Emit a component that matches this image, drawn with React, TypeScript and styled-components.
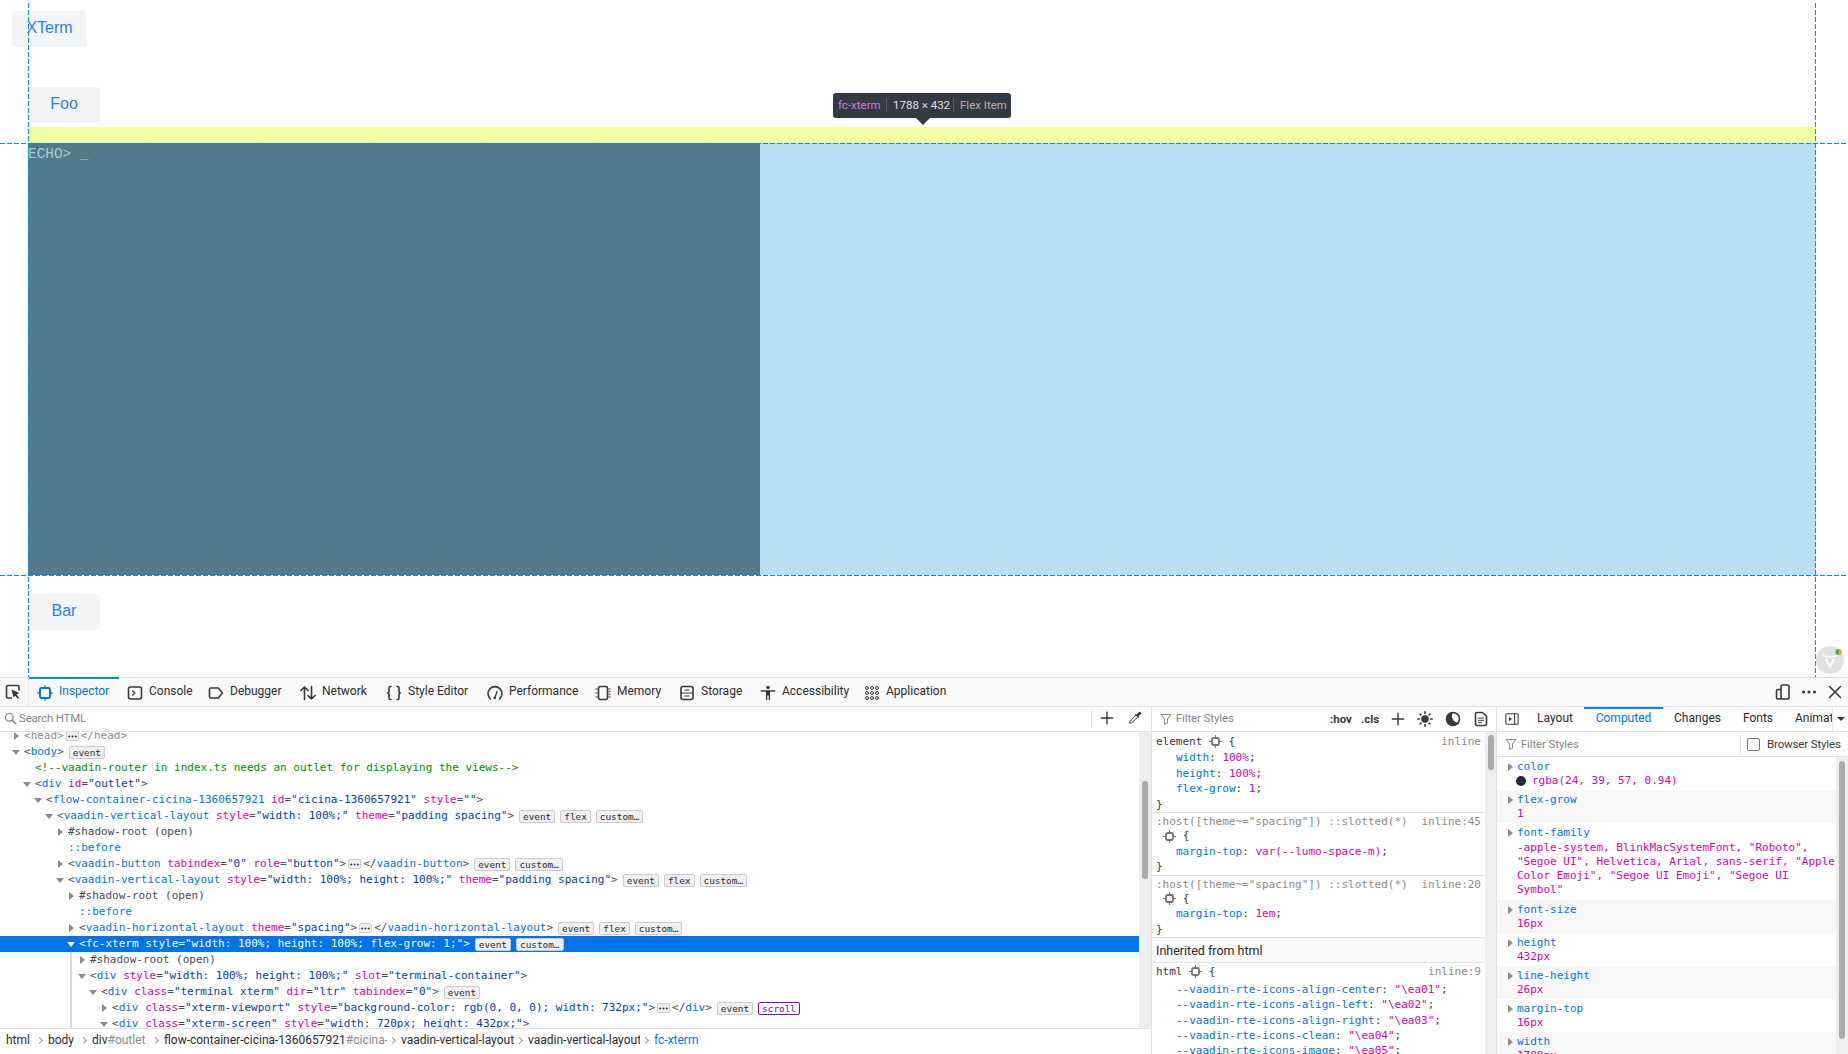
import React from "react";
import styled, { createGlobalStyle } from "styled-components";

const Global = createGlobalStyle`
  html, body { margin: 0; padding: 0; background: #fff; }
  * { box-sizing: border-box; }
`;

const UI = `"Roboto", "Noto Sans", sans-serif`;
const MONO = `"DejaVu Sans Mono", monospace`;

const Page = styled.div`
  width: 1848px; height: 1054px; overflow: hidden; display: flex; flex-direction: column;
  font-family: ${UI}; font-size: 12px; color: #2a2a2e;
`;
const Viewport = styled.div`
  position: relative; height: 677px; flex: none; padding: 11px 12px 0; background: #fff;
  font-family: "Liberation Sans", Arial, sans-serif;
`;
const Btn = styled.div`
  width: ${(p: { $w: number }) => p.$w}px; height: 36px; border-radius: 4px; background: #f3f4f6;
  color: #2a7ff0; font-size: 16px; display: flex; align-items: center; justify-content: center; padding-bottom: 2px;
`;
const Layout = styled.div`
  padding: 40px 0 0 16px; width: 1804px;
`;
const MarginBand = styled.div`
  height: 16px; margin-top: 4px; background: #f4ffa0; width: 1788px;
`;
const Terminal = styled.div`
  height: 432px; width: 1788px; display: flex; background: #b7e1f3; margin-bottom: 19px;
`;
const Screen = styled.div`
  width: 732px; background: #527a8c; color: #a3cbdc; padding: 3px 0 0 0;
  font: 14.4px/17px "Liberation Mono", "Courier New", monospace;
  white-space: pre;
`;
const GuideV = styled.div`
  position: absolute; top: 3px; bottom: 0; left: ${(p: { $x: number }) => p.$x}px; width: 1px;
  background: repeating-linear-gradient(to bottom, #0095dd 0 5px, transparent 5px 7px);
`;
const GuideH = styled.div`
  position: absolute; left: 0; right: 0; top: ${(p: { $y: number }) => p.$y}px; height: 1px;
  background: repeating-linear-gradient(to right, #0090d4 0 5px, transparent 5px 7px);
`;
const Tip = styled.div`
  position: absolute; left: 833px; top: 93px; width: 178px; height: 25px; background: #343a43;
  border-radius: 3px; display: flex; align-items: center; padding: 0 5px 2px; font: 11.5px ${UI}; color: #dfe1e5;
  &::after {
    content: ""; position: absolute; left: 83px; bottom: -7px; border: 7px solid transparent;
    border-bottom: 0; border-top-color: #343a43;
  }
`;
const TipPart = styled.span<{ $tone: string; $w: number }>`
  color: ${(p) => p.$tone}; width: ${(p) => p.$w}px; flex: none; white-space: nowrap;
`;
const TipSep = styled.span`
  width: 1px; height: 14px; background: #5b616b; margin: 0 6px; flex: none;
`;
const Badge = styled.div`
  position: absolute; left: 1816px; top: 646px; width: 28px; height: 28px;
`;

/* devtools */
const Dev = styled.div`
  flex: 1; min-height: 0; display: flex; flex-direction: column; background: #fff;
`;
const TopBar = styled.div`
  height: 30px; flex: none; background: #f9f9fa; border-top: 1px solid #e0e0e2; border-bottom: 1px solid #e0e0e2;
  display: flex; align-items: center; position: relative;
`;
const PickerCell = styled.div`
  width: 29px; height: 100%; border-right: 1px solid #e8e8ea; display: flex; align-items: center; justify-content: center; flex: none; padding-right: 3px;
`;
const Tab = styled.div<{ $active?: boolean }>`
  height: 30px; margin-top: -1px; padding: 0 8px; display: flex; align-items: center; gap: 6px; flex: none;
  color: ${(p) => (p.$active ? "#0074e8" : "#2a2a2e")};
  border-top: 2px solid ${(p) => (p.$active ? "#0a84ff" : "transparent")};
`;
const TabLabel = styled.span<{ $w: number }>`
  width: ${(p) => p.$w}px; white-space: nowrap; font-size: 12px; margin-top: -4px;
`;
const TopRight = styled.div`
  margin-left: auto; display: flex; align-items: center; gap: 10px; padding-right: 5px;
`;
const Split = styled.div`
  flex: 1; min-height: 0; display: flex;
`;
const MarkupPane = styled.div`
  width: 1152px; flex: none; display: flex; flex-direction: column; border-right: 1px solid #e0e0e2;
`;
const SearchBar = styled.div`
  height: 25px; flex: none; border-bottom: 1px solid #e0e0e2; display: flex; align-items: center; padding: 0 0 2px 4px; color: #86868a; position: relative;
`;
const SearchText = styled.span`
  margin-left: 2px; flex: 1; font-size: 11.5px; letter-spacing: -0.2px;
`;
const SearchTools = styled.div`
  width: 60px; display: flex; align-items: center; gap: 14px; padding-left: 8px;
  border-left: 1px solid #e8e8ea; height: 19px; flex: none;
`;
const MarkupBody = styled.div`
  flex: 1; min-height: 0; display: flex; overflow: hidden;
`;
const Tree = styled.div`
  flex: 1; min-width: 0; margin-top: -4px; font: 11px/16px ${MONO};
`;
const Row = styled.div<{ $level: number; $selected?: boolean; $dim?: boolean; $guide?: boolean }>`
  height: 16px; white-space: nowrap; display: flex; align-items: center;
  padding-left: ${(p) => 24 + p.$level * 11}px;
  --name: ${(p) => (p.$selected ? "#fff" : p.$dim ? "#8a8a90" : "#0074e8")};
  --attr: ${(p) => (p.$selected ? "#fff" : "#dd00a9")};
  --val: ${(p) => (p.$selected ? "#fff" : "#003eaa")};
  --pun: ${(p) => (p.$selected ? "#fff" : p.$dim ? "#8a8a90" : "#4a4a4f")};
  color: var(--pun);
  background: ${(p) => (p.$selected ? "#0074e8" : "transparent")};
  ${(p) => (p.$guide ? "background: linear-gradient(#dcdcdf,#dcdcdf) no-repeat 70px 0 / 2px 100%;" : "")}
`;
const Twisty = styled.span<{ $open?: boolean; $light?: boolean }>`
  width: 0; height: 0; flex: none; margin-left: ${(p) => (p.$open ? -12 : -10)}px;
  margin-right: ${(p) => (p.$open ? 4 : 5)}px;
  border-style: solid; border-color: transparent;
  ${(p) => {
    const c = p.$light ? "#fff" : "#8a8a8f";
    return p.$open
      ? `border-width: 5px 4px 0 4px; border-top-color: ${c};`
      : `border-width: 4px 0 4px 5px; border-left-color: ${c};`;
  }}
`;
const N = styled.span`color: var(--name); white-space: pre;`;
const A = styled.span`color: var(--attr); white-space: pre;`;
const V = styled.span`color: var(--val); white-space: pre;`;
const P = styled.span`white-space: pre;`;
const Comment = styled.span`color: #058b00; white-space: pre;`;
const Pill = styled.span<{ $purple?: boolean }>`
  margin-left: 5px; height: 13px; padding: 0 3px; border-radius: 2px; flex: none;
  font: 9.4px/11px ${MONO};
  border: 1px solid ${(p) => (p.$purple ? "#8000d7" : "#cacad1")};
  background: ${(p) => (p.$purple ? "#fff" : "#f0f0f2")};
  color: ${(p) => (p.$purple ? "#8000d7" : "#2a2a2e")};
`;
const DotsBox = styled.span`
  height: 10px; width: 13px; margin: 0 2px; border: 1px solid #cacad1; border-radius: 2px; background: #f0f0f2; flex: none;
  display: flex; align-items: center; justify-content: center;
`;
const Track = styled.div`
  width: ${(p: { $w: number }) => p.$w}px; background: #eeeef0; position: relative; flex: none;
`;
const Thumb = styled.div<{ $top: number; $h: number; $x: number }>`
  position: absolute; left: ${(p) => p.$x}px; top: ${(p) => p.$top}px; width: 6px; height: ${(p) => p.$h}px;
  border-radius: 3px; background: #ababae;
`;
const Crumbs = styled.div`
  height: 26px; flex: none; border-top: 1px solid #e0e0e2; display: flex; align-items: center; padding: 0 0 3px 6px; background: #fff; color: #2a2a2e;
`;
const Crumb = styled.span<{ $w: number; $on?: boolean }>`
  width: ${(p) => p.$w}px; flex: none; white-space: nowrap; overflow: hidden; color: ${(p) => (p.$on ? "#0074e8" : "#2a2a2e")};
`;
const CrumbId = styled.span`color: #8a8a90;`;
const Chev = styled.span`
  width: 5px; height: 5px; flex: none; border-top: 1px solid #9a9a9f; border-right: 1px solid #9a9a9f; transform: rotate(45deg); margin: 0 6px 0 3px;
`;

const RulesPane = styled.div`
  width: 345px; flex: none; display: flex; flex-direction: column; border-right: 1px solid #e0e0e2;
`;
const RulesBar = styled.div`
  height: 25px; flex: none; border-bottom: 1px solid #e0e0e2; display: flex; align-items: center; padding: 0 0 1px 8px; color: #86868a;
`;
const FilterText = styled.span`
  margin-left: 1px; flex: 1; font-size: 11.5px; letter-spacing: -0.1px; padding-bottom: 1px;
`;
const BoldBtn = styled.span`
  font-weight: 700; font-size: 11.5px; color: #38383d; width: ${(p: { $w: number }) => p.$w}px;
`;
const RulesTools = styled.div`
  display: flex; align-items: center; gap: 12px; padding-right: 7px; margin-left: 11px;
`;
const RulesBody = styled.div`
  flex: 1; min-height: 0; display: flex; overflow: hidden;
`;
const RulesList = styled.div`
  flex: 1; min-width: 0; font: 11px/15.4px ${MONO}; color: #38383d; padding-top: 2px;
`;
const Rule = styled.div`
  border-bottom: 1px solid #e0e0e2; padding: 1px 4px 0 4px;
  &:first-child { padding-top: 0; }
  &:last-child { border-bottom: 0; }
`;
const RuleHead = styled.div<{ $gap?: number }>`
  display: flex; align-items: center; white-space: pre; margin-bottom: ${(p) => p.$gap ?? 0}px;
`;
const Sel = styled.span<{ $grey?: boolean }>`
  color: ${(p) => (p.$grey ? "#8a8a90" : "#38383d")};
`;
const Src = styled.span`
  margin-left: auto; color: #8a8a90;
`;
const Decl = styled.div`
  padding-left: 20px; white-space: pre;
`;
const Prop = styled.span`color: #0074e8;`;
const Val2 = styled.span`color: #dd00a9;`;
const GearRow = styled.div`
  display: flex; align-items: center; padding-left: 7px; white-space: pre; margin-top: -1px;
`;
const Inherited = styled.div`
  height: 25px; display: flex; align-items: center; background: #f9f9fa; border-bottom: 1px solid #e0e0e2; padding-left: 4px;
  font: 12.5px ${UI}; color: #2a2a2e;
`;

const SidePane = styled.div`
  flex: 1; min-width: 0; display: flex; flex-direction: column;
`;
const SideTabs = styled.div`
  height: 25px; flex: none; border-bottom: 1px solid #e0e0e2; display: flex; align-items: center; position: relative;
`;
const SideToggle = styled.div`
  width: 29px; flex: none; display: flex; justify-content: center;
`;
const SideTab = styled.div<{ $active?: boolean; $w: number; $clipped?: boolean }>`
  width: ${(p) => p.$w}px; height: 25px; flex: none; font-size: 12px; white-space: nowrap; overflow: hidden;
  text-align: ${(p) => (p.$clipped ? "left" : "center")};
  padding-left: ${(p) => (p.$clipped ? 11 : 0)}px;
  color: ${(p) => (p.$active ? "#0074e8" : "#2a2a2e")};
  border-top: 2px solid ${(p) => (p.$active ? "#0a84ff" : "transparent")};
  line-height: 19px;
`;
const SideMore = styled.div`
  flex: 1; height: 100%; border-left: 1px solid #e8e8ea; display: flex; align-items: center; justify-content: center;
  &::after { content: ""; border: 4px solid transparent; border-bottom: 0; border-top-color: #38383d; }
`;
const SideFilter = styled.div`
  height: 25px; flex: none; border-bottom: 1px solid #e0e0e2; display: flex; align-items: center; padding-left: 8px; color: #86868a;
`;
const FilterGrow = styled.span`
  flex: 1; margin-left: 1px; font-size: 11.5px; letter-spacing: -0.1px;
`;
const BrowserStyles = styled.div`
  width: 108px; height: 19px; border-left: 1px solid #e8e8ea; display: flex; align-items: center; padding-left: 6px; gap: 7px; color: #38383d; flex: none; white-space: nowrap;
  font-size: 11.5px; letter-spacing: -0.15px;
`;
const Check = styled.span`
  width: 13px; height: 13px; border: 1px solid #737373; border-radius: 2px; flex: none;
`;
const SideBody = styled.div`
  flex: 1; min-height: 0; display: flex; overflow: hidden;
`;
const CompList = styled.div`
  flex: 1; min-width: 0; font: 11px/14px ${MONO};
`;
const CompRow = styled.div`
  padding: 3px 0 2.2px 20px; position: relative;
  &:nth-child(even) { background: #f7f7f8; }
`;
const CompTwisty = styled.span`
  position: absolute; left: 11px; top: 6px; width: 0; height: 0;
  border-style: solid; border-color: transparent; border-width: 4px 0 4px 5px; border-left-color: #8a8a8f;
`;
const CompName = styled.div`color: #0074e8;`;
const CompVal = styled.div`color: #dd00a9; display: flex; align-items: center;`;
const CompWrap = styled.div`color: #dd00a9; margin-top: 1px;`;
const Swatch = styled.span`
  width: 10px; height: 10px; border-radius: 50%; background: #1f2c3e; margin: 0 6px 0 -1px; flex: none;
`;

/* ---------- icons ---------- */
type IP = { c?: string; s?: number };
const Svg: React.FC<IP & { children: React.ReactNode }> = ({ c = "#38383d", s = 16, children }) => (
  <svg width={s} height={s} viewBox="0 0 16 16" fill="none" stroke={c} strokeWidth={1.6} strokeLinecap="round" strokeLinejoin="round" style={{ flex: "none", display: "block" }}>
    {children}
  </svg>
);
const Picker = () => (
  <Svg><path d="M6.500 14H3a1.500 1.500 0 0 1-1.500-1.500V3A1.500 1.500 0 0 1 3 1.500h9.500A1.500 1.500 0 0 1 14 3v3" /><path d="M6.500 5.500l8 3.500-3 1.500 2.500 3-1.300 1.200-2.500-3L8.500 13.500z" fill="#38383d" stroke="none" /></Svg>
);
const Chip = (p: IP) => (
  <Svg {...p}><rect x="3" y="3" width="10" height="10" rx="1.500" strokeWidth="1.900" /><path d="M8 .8v2M8 13v2.200M.8 8h2M13 8h2.200" strokeWidth="1.300" /></Svg>
);
const ConsoleI = () => (
  <Svg><rect x="1.500" y="2" width="13" height="12" rx="2" /><path d="M5.500 5.800L8 8 5.500 10.200" strokeWidth="1.200" /></Svg>
);
const DebuggerI = () => (
  <Svg><path d="M2.800 3h7.500l4.200 5-4.200 5H2.800A1.300 1.300 0 0 1 1.500 11.700V4.300A1.300 1.300 0 0 1 2.800 3z" /></Svg>
);
const NetworkI = () => (
  <Svg><path d="M4.500 14.500V2M1 5.500L4.500 2 8 5.500M11.500 1.500V14M8 10.500l3.500 3.500 3.500-3.500" /></Svg>
);
const BracesI = () => (
  <Svg><path d="M5 1.500H4.200C3.300 1.500 3 2 3 3v3c0 1-.5 2-1.500 2C2.500 8 3 9 3 10v3c0 1 .3 1.500 1.200 1.500H5M11 1.500h.8c.9 0 1.200.5 1.200 1.500v3c0 1 .5 2 1.500 2-1 0-1.500 1-1.500 2v3c0 1-.3 1.500-1.200 1.500H11" /></Svg>
);
const PerfI = () => (
  <Svg><path d="M3.500 14A7 7 0 1 1 12.500 14" /><path d="M8 12.500l2-6" strokeWidth="1.300" /><circle cx="7.700" cy="13" r="1.300" fill="#38383d" stroke="none" /></Svg>
);
const MemoryI = () => (
  <Svg><rect x="3.500" y="1.500" width="9" height="13" rx="2" /><path d="M.8 4h1.400M.8 8h1.400M.8 12h1.400M13.800 4h1.400M13.800 6.700h1.400M13.800 9.300h1.400M13.800 12h1.400" strokeWidth="1" /></Svg>
);
const StorageI = () => (
  <Svg><rect x="2" y="1.500" width="12" height="13" rx="2" /><path d="M2 8h12M6 5h4M6 11h4" strokeWidth="1.200" /></Svg>
);
const AccessI = () => (
  <Svg><circle cx="8" cy="2.500" r="1.800" fill="#38383d" stroke="none" /><path d="M1.500 6h13" strokeWidth="1.700" /><path d="M6 6h4v9H8.700v-4.500H7.300V15H6z" fill="#38383d" stroke="none" /></Svg>
);
const AppI = () => (
  <Svg>
    {[3, 8, 13].map((x) => [3, 8, 13].map((y) => <circle key={`${x}-${y}`} cx={x} cy={y} r="1.500" strokeWidth="1" />))}
  </Svg>
);
const DockI = () => (
  <Svg><path d="M6 5.500H3A1.500 1.500 0 0 0 1.500 7v6.500A1.500 1.500 0 0 0 3 15h9.500A1.500 1.500 0 0 0 14 13.500V2.500A1.500 1.500 0 0 0 12.500 1H7.500A1.500 1.500 0 0 0 6 2.500V15" /></Svg>
);
const MoreI = () => (
  <Svg><circle cx="2.500" cy="8" r="1.600" fill="#38383d" stroke="none" /><circle cx="8" cy="8" r="1.600" fill="#38383d" stroke="none" /><circle cx="13.500" cy="8" r="1.600" fill="#38383d" stroke="none" /></Svg>
);
const CloseI = () => (
  <Svg><path d="M2.500 2.500l11 11M13.500 2.500l-11 11" /></Svg>
);
const SearchI = () => (
  <Svg c="#8a8a90" s={13}><circle cx="6.500" cy="6.500" r="4.700" /><path d="M10 10l4.500 4.500" strokeWidth="2" /></Svg>
);
const PlusI = () => (
  <Svg s={14}><path d="M8 1.500v13M1.500 8h13" /></Svg>
);
const DropperI = () => (
  <Svg s={14}><path d="M9 5L2.500 11.500 2 14l2.500-.5L11 7" strokeWidth="1.100" /><path d="M8 4l4 4 .9-.9-1-1L15 3.200A1.700 1.700 0 0 0 12.700 1L9.900 4 8.900 3z" fill="#38383d" stroke="none" /></Svg>
);
const FunnelI = () => (
  <Svg c="#8a8a90" s={12}><path d="M1.500 2h13L10 8v5.500L6 15V8z" strokeWidth="1.400" /></Svg>
);
const SunI = () => (
  <Svg><circle cx="8" cy="8" r="3.800" fill="#38383d" stroke="none" /><path d="M8 .8v1.600M8 13.600v1.600M.8 8h1.600M13.600 8h1.600M3 3l1 1M12 12l1 1M3 13l1-1M12 4l1-1" /></Svg>
);
const ContrastI = () => (
  <Svg><circle cx="8" cy="8" r="6.500" /><path d="M8 1.500a6.500 6.500 0 1 0 5.500 10A6.500 6.500 0 0 1 8 1.500z" fill="#38383d" stroke="none" /></Svg>
);
const DocI = () => (
  <Svg><path d="M4 1.500h5.500l4 3.500v8a1.500 1.500 0 0 1-1.500 1.500H4A1.500 1.500 0 0 1 2.500 13V3A1.500 1.500 0 0 1 4 1.500z" /><path d="M5.500 7h5M5.500 9.300h5M5.500 11.600h3" strokeWidth="1" /></Svg>
);
const ToggleI = () => (
  <Svg s={14}><rect x="1" y="2" width="14" height="12" rx="1" strokeWidth="1.200" /><path d="M11 2v12" strokeWidth="1.200" /><path d="M4.500 5.500L8 8l-3.500 2.500z" fill="#38383d" stroke="none" /></Svg>
);
const Gear = () => (
  <svg width="13" height="13" viewBox="0 0 13 13" style={{ flex: "none", display: "block" }} fill="none" stroke="#737373">
    <rect x="3" y="3" width="7" height="7" rx="1.500" strokeWidth="1.800" /><path d="M6.500 0v3M6.500 10v3M0 6.500h3M10 6.500h3" strokeWidth="1" />
  </svg>
);
const Vaadin = () => (
  <svg width="28" height="28" viewBox="0 0 28 28">
    <circle cx="14" cy="14" r="14" fill="#e1e1e1" />
    <path d="M7 8c0 2 1 2.500 3 2.500h2.500c1 0 1.500.5 1.500 1.500 0-1 .5-1.500 1.500-1.500H18c2 0 3-.5 3-2.500" fill="none" stroke="#fff" strokeWidth="1.400" />
    <path d="M10 13l4 8 4-8" fill="none" stroke="#fff" strokeWidth="2" />
    <circle cx="22.500" cy="6" r="3" fill="#37b24d" />
    <path d="M22.500 3a3 3 0 0 1 0 6z" fill="#f5a623" />
  </svg>
);
const Dots = () => (
  <DotsBox>
    <svg width="9" height="3" viewBox="0 0 9 3" style={{ display: "block" }}>
      <circle cx="1.200" cy="1.500" r="1" fill="#333" /><circle cx="4.500" cy="1.500" r="1" fill="#333" /><circle cx="7.800" cy="1.500" r="1" fill="#333" />
    </svg>
  </DotsBox>
);

const tabs: [string, number, React.ReactNode][] = [
  ["Console", 43, <ConsoleI />],
  ["Debugger", 54, <DebuggerI />],
  ["Network", 48, <NetworkI />],
  ["Style Editor", 63, <BracesI />],
  ["Performance", 70, <PerfI />],
  ["Memory", 46, <MemoryI />],
  ["Storage", 43, <StorageI />],
  ["Accessibility", 66, <AccessI />],
  ["Application", 63, <AppI />],
];

const Event = () => <Pill>event</Pill>;
const Flex = () => <Pill>flex</Pill>;
const Custom = () => <Pill>custom…</Pill>;

const comp: [string, string][] = [
  ["font-size", "16px"],
  ["height", "432px"],
  ["line-height", "26px"],
  ["margin-top", "16px"],
  ["width", "1788px"],
];

export default function App() {
  return (
    <Page>
      <Global />
      <Viewport>
        <Btn $w={75}>XTerm</Btn>
        <Layout>
          <Btn $w={72}>Foo</Btn>
          <MarginBand />
          <Terminal>
            <Screen>ECHO&gt; _</Screen>
          </Terminal>
          <Btn $w={72}>Bar</Btn>
        </Layout>
        <GuideV $x={28} />
        <GuideV $x={1815} />
        <GuideH $y={143} />
        <GuideH $y={575} />
        <Tip>
          <TipPart $tone="#c97ae6" $w={42}>fc-xterm</TipPart>
          <TipSep />
          <TipPart $tone="#dfe1e5" $w={54}>1788 × 432</TipPart>
          <TipSep />
          <TipPart $tone="#b1b1b3" $w={46}>Flex Item</TipPart>
        </Tip>
        <Badge><Vaadin /></Badge>
      </Viewport>
      <Dev>
        <TopBar>
          <PickerCell><Picker /></PickerCell>
          <Tab $active>
            <Chip c="#0074e8" />
            <TabLabel $w={52}>Inspector</TabLabel>
          </Tab>
          {tabs.map(([t, w, i]) => (
            <Tab key={t}>
              {i}
              <TabLabel $w={w}>{t}</TabLabel>
            </Tab>
          ))}
          <TopRight>
            <DockI />
            <MoreI />
            <CloseI />
          </TopRight>
        </TopBar>
        <Split>
          <MarkupPane>
            <SearchBar>
              <SearchI />
              <SearchText>Search HTML</SearchText>
              <SearchTools><PlusI /><DropperI /></SearchTools>
            </SearchBar>
            <MarkupBody>
              <Tree>
                <Row $level={0} $dim><Twisty /><P>&lt;</P><N>head</N><P>&gt;</P><Dots /><P>&lt;/</P><N>head</N><P>&gt;</P></Row>
                <Row $level={0}><Twisty $open /><P>&lt;</P><N>body</N><P>&gt;</P><Event /></Row>
                <Row $level={1}><Comment>&lt;!--vaadin-router in index.ts needs an outlet for displaying the views--&gt;</Comment></Row>
                <Row $level={1}><Twisty $open /><P>&lt;</P><N>div</N><P> </P><A>id</A><P>=</P><V>"outlet"</V><P>&gt;</P></Row>
                <Row $level={2}><Twisty $open /><P>&lt;</P><N>flow-container-cicina-1360657921</N><P> </P><A>id</A><P>=</P><V>"cicina-1360657921"</V><P> </P><A>style</A><P>=</P><V>""</V><P>&gt;</P></Row>
                <Row $level={3}><Twisty $open /><P>&lt;</P><N>vaadin-vertical-layout</N><P> </P><A>style</A><P>=</P><V>"width: 100%;"</V><P> </P><A>theme</A><P>=</P><V>"padding spacing"</V><P>&gt;</P><Event /><Flex /><Custom /></Row>
                <Row $level={4}><Twisty /><P>#shadow-root (open)</P></Row>
                <Row $level={4}><N>::before</N></Row>
                <Row $level={4}><Twisty /><P>&lt;</P><N>vaadin-button</N><P> </P><A>tabindex</A><P>=</P><V>"0"</V><P> </P><A>role</A><P>=</P><V>"button"</V><P>&gt;</P><Dots /><P>&lt;/</P><N>vaadin-button</N><P>&gt;</P><Event /><Custom /></Row>
                <Row $level={4}><Twisty $open /><P>&lt;</P><N>vaadin-vertical-layout</N><P> </P><A>style</A><P>=</P><V>"width: 100%; height: 100%;"</V><P> </P><A>theme</A><P>=</P><V>"padding spacing"</V><P>&gt;</P><Event /><Flex /><Custom /></Row>
                <Row $level={5}><Twisty /><P>#shadow-root (open)</P></Row>
                <Row $level={5}><N>::before</N></Row>
                <Row $level={5}><Twisty /><P>&lt;</P><N>vaadin-horizontal-layout</N><P> </P><A>theme</A><P>=</P><V>"spacing"</V><P>&gt;</P><Dots /><P>&lt;/</P><N>vaadin-horizontal-layout</N><P>&gt;</P><Event /><Flex /><Custom /></Row>
                <Row $level={5} $selected><Twisty $open $light /><P>&lt;</P><N>fc-xterm</N><P> </P><A>style</A><P>=</P><V>"width: 100%; height: 100%; flex-grow: 1;"</V><P>&gt;</P><Event /><Custom /></Row>
                <Row $level={6} $guide><Twisty /><P>#shadow-root (open)</P></Row>
                <Row $level={6} $guide><Twisty $open /><P>&lt;</P><N>div</N><P> </P><A>style</A><P>=</P><V>"width: 100%; height: 100%;"</V><P> </P><A>slot</A><P>=</P><V>"terminal-container"</V><P>&gt;</P></Row>
                <Row $level={7} $guide><Twisty $open /><P>&lt;</P><N>div</N><P> </P><A>class</A><P>=</P><V>"terminal xterm"</V><P> </P><A>dir</A><P>=</P><V>"ltr"</V><P> </P><A>tabindex</A><P>=</P><V>"0"</V><P>&gt;</P><Event /></Row>
                <Row $level={8} $guide><Twisty /><P>&lt;</P><N>div</N><P> </P><A>class</A><P>=</P><V>"xterm-viewport"</V><P> </P><A>style</A><P>=</P><V>"background-color: rgb(0, 0, 0); width: 732px;"</V><P>&gt;</P><Dots /><P>&lt;/</P><N>div</N><P>&gt;</P><Event /><Pill $purple>scroll</Pill></Row>
                <Row $level={8} $guide><Twisty $open /><P>&lt;</P><N>div</N><P> </P><A>class</A><P>=</P><V>"xterm-screen"</V><P> </P><A>style</A><P>=</P><V>"width: 720px; height: 432px;"</V><P>&gt;</P></Row>
              </Tree>
              <Track $w={12}><Thumb $x={3} $top={49} $h={98} /></Track>
            </MarkupBody>
            <Crumbs>
              <Crumb $w={28}>html</Crumb><Chev />
              <Crumb $w={30}>body</Crumb><Chev />
              <Crumb $w={58}>div<CrumbId>#outlet</CrumbId></Crumb><Chev />
              <Crumb $w={223}>flow-container-cicina-1360657921<CrumbId>#cicina-…</CrumbId></Crumb><Chev />
              <Crumb $w={113}>vaadin-vertical-layout</Crumb><Chev />
              <Crumb $w={112}>vaadin-vertical-layout</Crumb><Chev />
              <Crumb $w={50} $on>fc-xterm</Crumb>
            </Crumbs>
          </MarkupPane>
          <RulesPane>
            <RulesBar>
              <FunnelI />
              <FilterText>&nbsp;Filter Styles</FilterText>
              <BoldBtn $w={31}>:hov</BoldBtn>
              <BoldBtn $w={19}>.cls</BoldBtn>
              <RulesTools>
                <PlusI />
                <SunI />
                <ContrastI />
                <DocI />
              </RulesTools>
            </RulesBar>
            <RulesBody>
              <RulesList>
                <Rule>
                  <RuleHead $gap={1}><Sel>element </Sel><Gear /><Sel> {"{"}</Sel><Src>inline</Src></RuleHead>
                  <Decl><Prop>width</Prop>: <Val2>100%</Val2>;</Decl>
                  <Decl><Prop>height</Prop>: <Val2>100%</Val2>;</Decl>
                  <Decl><Prop>flex-grow</Prop>: <Val2>1</Val2>;</Decl>
                  <div>{"}"}</div>
                </Rule>
                <Rule>
                  <RuleHead><Sel $grey>:host([theme~="spacing"]) ::slotted(*)</Sel><Src>inline:45</Src></RuleHead>
                  <GearRow><Gear /><Sel> {"{"}</Sel></GearRow>
                  <Decl><Prop>margin-top</Prop>: <Val2>var(--lumo-space-m)</Val2>;</Decl>
                  <div>{"}"}</div>
                </Rule>
                <Rule>
                  <RuleHead><Sel $grey>:host([theme~="spacing"]) ::slotted(*)</Sel><Src>inline:20</Src></RuleHead>
                  <GearRow><Gear /><Sel> {"{"}</Sel></GearRow>
                  <Decl><Prop>margin-top</Prop>: <Val2>1em</Val2>;</Decl>
                  <div>{"}"}</div>
                </Rule>
                <Inherited>Inherited from html</Inherited>
                <Rule>
                  <RuleHead $gap={2}><Sel>html </Sel><Gear /><Sel> {"{"}</Sel><Src>inline:9</Src></RuleHead>
                  <Decl><Prop>--vaadin-rte-icons-align-center</Prop>: <Val2>"\ea01"</Val2>;</Decl>
                  <Decl><Prop>--vaadin-rte-icons-align-left</Prop>: <Val2>"\ea02"</Val2>;</Decl>
                  <Decl><Prop>--vaadin-rte-icons-align-right</Prop>: <Val2>"\ea03"</Val2>;</Decl>
                  <Decl><Prop>--vaadin-rte-icons-clean</Prop>: <Val2>"\ea04"</Val2>;</Decl>
                  <Decl><Prop>--vaadin-rte-icons-image</Prop>: <Val2>"\ea05"</Val2>;</Decl>
                </Rule>
              </RulesList>
              <Track $w={11}><Thumb $x={3} $top={3} $h={35} /></Track>
            </RulesBody>
          </RulesPane>
          <SidePane>
            <SideTabs>
              <SideToggle><ToggleI /></SideToggle>
              <SideTab $w={58}>Layout</SideTab>
              <SideTab $w={79} $active>Computed</SideTab>
              <SideTab $w={69}>Changes</SideTab>
              <SideTab $w={52}>Fonts</SideTab>
              <SideTab $w={48} $clipped>Animations</SideTab>
              <SideMore />
            </SideTabs>
            <SideFilter>
              <FunnelI />
              <FilterGrow>&nbsp;Filter Styles</FilterGrow>
              <BrowserStyles><Check />Browser Styles</BrowserStyles>
            </SideFilter>
            <SideBody>
              <CompList>
                <CompRow><CompTwisty /><CompName>color</CompName><CompVal><Swatch />rgba(24, 39, 57, 0.94)</CompVal></CompRow>
                <CompRow><CompTwisty /><CompName>flex-grow</CompName><CompVal>1</CompVal></CompRow>
                <CompRow><CompTwisty /><CompName>font-family</CompName><CompWrap>-apple-system, BlinkMacSystemFont, "Roboto", "Segoe UI", Helvetica, Arial, sans-serif, "Apple Color Emoji", "Segoe UI Emoji", "Segoe UI Symbol"</CompWrap></CompRow>
                {comp.map(([n, v]) => (
                  <CompRow key={n}><CompTwisty /><CompName>{n}</CompName><CompVal>{v}</CompVal></CompRow>
                ))}
              </CompList>
              <Track $w={12}><Thumb $x={3} $top={4} $h={278} /></Track>
            </SideBody>
          </SidePane>
        </Split>
      </Dev>
    </Page>
  );
}
